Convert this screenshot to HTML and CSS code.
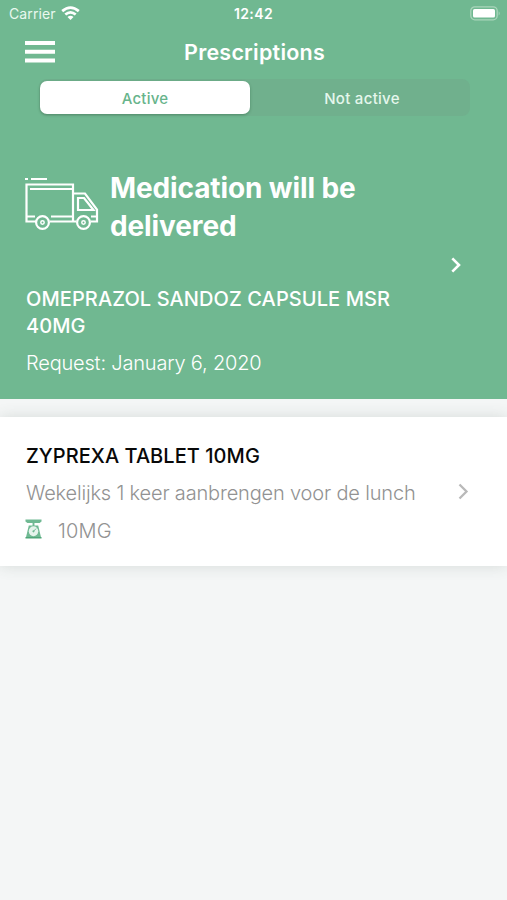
FILE: index.html
```html
<!DOCTYPE html>
<html lang="en">
<head>
<meta charset="utf-8">
<title>Prescriptions</title>
<link rel="stylesheet" href="styles.css">
</head>
<body>
<header class="top">
  <div class="status">
    <div class="carrier"><span class="carrier-name">Carrier</span>
      <svg class="wifi" width="19" height="15" viewBox="0 0 19 15" fill="none" stroke="#fff" stroke-width="2.8"><path d="M1.2 5.1Q9.5-1.8 17.8 5.1M4.3 8.5Q9.5 4.2 14.7 8.5"/><path d="M6.5 10.9Q9.5 8.6 12.5 10.9L9.5 14Z" fill="#fff" stroke="none"/></svg>
    </div>
    <time class="clock">12:42</time>
    <svg class="battery" width="31" height="15" viewBox="0 0 31 15"><rect x=".8" y=".8" width="26.4" height="13" rx="4" fill="none" stroke="#a9d5bb" stroke-width="1.3"/><rect x="3" y="3" width="22" height="8.6" rx="1.6" fill="#fff"/><path d="M28.7 5.2q2 2.1 0 4.2z" fill="#a9d5bb"/></svg>
  </div>
  <nav class="bar">
    <svg class="menu" width="30" height="22" viewBox="0 0 30 22" fill="#fff"><path d="M0 0h30v4H0zM0 8.7h30v4H0zM0 17.4h30v4H0z"/></svg>
    <h1 class="title">Prescriptions</h1>
  </nav>
  <div class="tabs">
    <div class="tab tab-on"><span>Active</span></div>
    <div class="tab"><span>Not active</span></div>
  </div>
</header>
<section class="delivery">
  <div class="delivery-main">
    <div class="headline">
      <svg class="truck" width="74" height="54" viewBox="0 0 74 54" fill="none" stroke="#fff" stroke-width="2.2"><path d="M0 2h3M6 2h16M11 44.500H1.500V7.500H48V44.500H25M5 12h42M2 39.500h8M26 39.500h21M48 16.500h12l12 16V44.500H66M48 44.500h3M66 39.500h5M53 21h6l9.500 12H53z"/><circle cx="17.500" cy="45.500" r="6.400"/><circle cx="17.500" cy="45.500" r="1.700" stroke-width="1.500"/><circle cx="58.500" cy="45.500" r="6.400"/><circle cx="58.500" cy="45.500" r="1.700" stroke-width="1.500"/></svg>
      <h2 class="message">Medication will be<br>delivered</h2>
    </div>
    <p class="drug">OMEPRAZOL SANDOZ CAPSULE MSR<br>40MG</p>
    <p class="request">Request: January 6, 2020</p>
  </div>
  <svg class="chevron chevron-light" width="10" height="16" viewBox="0 0 10 16" fill="none" stroke="#fff" stroke-width="2.6"><path d="M1.300 1.300 8 8l-6.700 6.700"/></svg>
</section>
<section class="card">
  <div class="card-main">
    <h3 class="name">ZYPREXA TABLET 10MG</h3>
    <p class="usage">Wekelijks 1 keer aanbrengen voor de lunch</p>
    <div class="dose">
      <svg class="scale" width="17" height="20" viewBox="0 0 18 20" preserveAspectRatio="none"><path d="M.5.500h17v2l-2 1.500h-13L.5 2.500zM8 4h2v3H8zM4 6.500h10L17 18.500H1z" fill="#70b993"/><path d="M.5 18h17v1.500H.5z" fill="#4fa678"/><circle cx="9" cy="12.300" r="5" fill="#e6f4ec"/><circle cx="9" cy="12.300" r="1.100" fill="#70b993"/><path d="m9 12.300 2.700-2.700" stroke="#70b993"/></svg>
      <span class="amount">10MG</span>
    </div>
  </div>
  <svg class="chevron" width="11" height="17" viewBox="0 0 11 17" fill="none" stroke="#b9b9b9" stroke-width="2.300"><path d="m1.500 1.500 7 7-7 7"/></svg>
</section>
</body>
</html>
```
FILE: styles.css
```css
* { box-sizing: border-box; }
body { margin: 0; min-height: 900px; background: #f4f6f6; font-family: Inter, "Liberation Sans", sans-serif; }
h1, h2, h3, p { margin: 0; white-space: nowrap; }
svg { display: block; flex: none; }
.top { height: 130px; background: #70b891; color: #fff; }
.status { height: 26px; display: grid; grid-template-columns: 1fr auto 1fr; padding: 0 6px 0 9px; align-items: center; }
.carrier { display: flex; gap: 5px; align-items: center; font-size: 14px; letter-spacing: .1px; color: #e9f8ef; }
.wifi { margin-top: 0; }
.clock { margin-left: -3px; font-size: 14px; font-weight: 600; letter-spacing: .4px; }
.battery { justify-self: end; }
.bar { height: 50px; display: grid; grid-template-columns: 1fr auto 1fr; padding: 0 25px; align-items: center; }
.menu { margin-top: 1px; }
.title { padding: 1px 0 0 2px; font-size: 21.500px; font-weight: 600; line-height: 26px; letter-spacing: .22px; }
.tabs { display: flex; width: 431px; height: 37px; margin: 3px auto 0 39px; padding: 2px 1px; border-radius: 8px; background: #70b08d; }
.tab { flex: 1; display: flex; align-items: center; justify-content: center; padding: 0 0 0 5px; font-size: 15px; font-weight: 500; letter-spacing: .3px; color: #e5f7ec; }
.tab-on { flex: 0 0 210px; padding-left: 0; letter-spacing: .2px; background: #fff; color: #67b48b; border-radius: 7px; box-shadow: 0 1px 3px rgba(0,50,20,.3); }
.tab span { position: relative; top: .5px; }
.delivery { height: 269px; padding: 39px 46px 0 25px; display: flex; justify-content: space-between; background: #70b891; color: #fff; }
.headline { display: flex; gap: 11px; }
.truck { margin-top: 8px; }
.message { font-size: 28px; line-height: 38px; font-weight: 700; letter-spacing: -.11px; }
.drug { margin: 41px 0 0; font-size: 20px; line-height: 27px; font-weight: 500; letter-spacing: .09px; }
.request { margin-top: 10px; font-size: 20px; line-height: 27px; font-weight: 300; letter-spacing: -.19px; }
.drug, .request, .name, .usage { padding-left: 1px; }
.chevron-light { margin-top: 88px; }
.card { height: 149px; margin-top: 18px; padding: 26px 38px 0 25px; display: flex; justify-content: space-between; background: #fff; box-shadow: 0 0 14px rgba(60,80,70,.16); }
.name { font-size: 20px; line-height: 27px; font-weight: 500; letter-spacing: .05px; color: #080808; }
.usage { margin-top: 10px; font-size: 20px; line-height: 27px; font-weight: 300; letter-spacing: -.17px; color: #929292; }
.dose { display: flex; align-items: center; gap: 16px; margin-top: 10px; height: 27px; font-size: 20px; font-weight: 300; letter-spacing: .2px; color: #929292; }
.scale { margin-top: -3px; }
.card .chevron { margin-top: 40px; }
```
